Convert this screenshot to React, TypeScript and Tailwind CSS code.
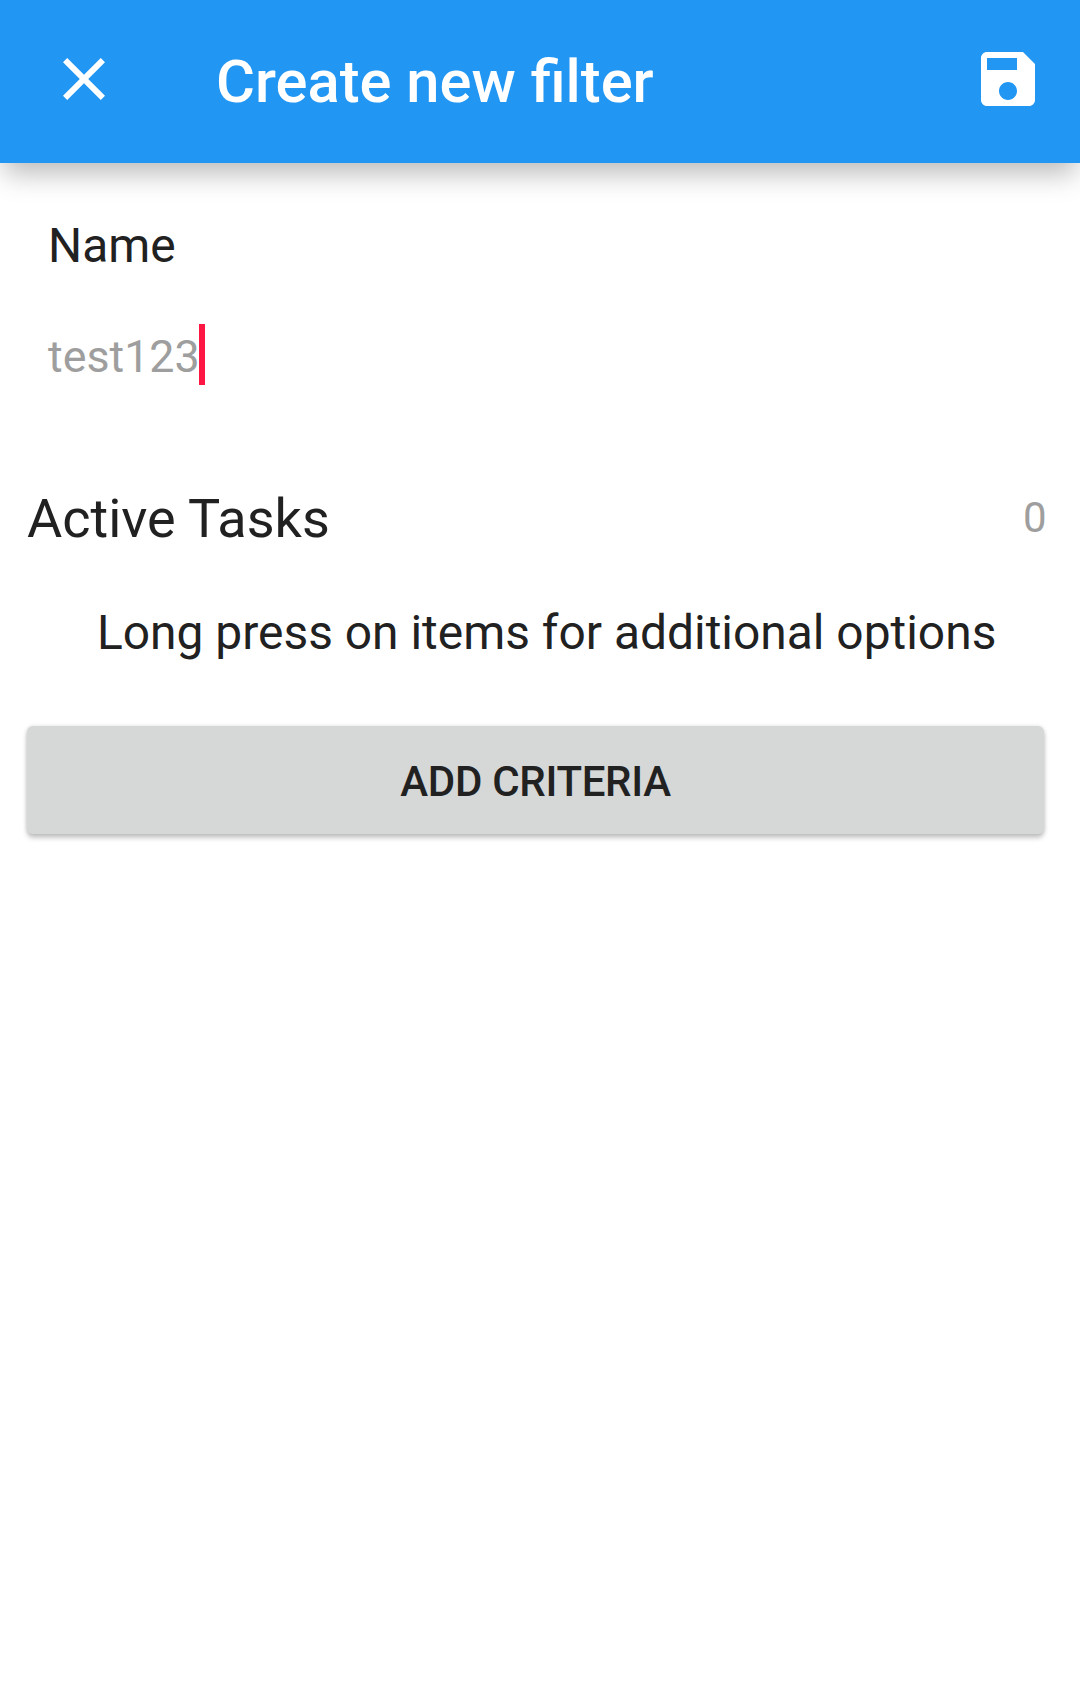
export default function App() {
  return (
    <div className="h-[1699px] w-[1080px] overflow-hidden bg-white font-['Roboto',sans-serif] text-[#212121]">
      <header className="flex h-[163px] items-start bg-[#2196f3] pt-[43px] pr-[36px] pl-[48px] text-white shadow-[0_14px_26px_-4px_rgba(0,0,0,0.28)]">
        <button aria-label="Close" className="size-[72px]">
          <svg viewBox="0 0 24 24" className="size-[72px]" fill="currentColor">
            <path d="M19 6.41 17.59 5 12 10.59 6.41 5 5 6.41 10.59 12 5 17.59 6.41 19 12 13.41 17.59 19 19 17.59 13.41 12z" />
          </svg>
        </button>
        <h1 className="mt-[4px] ml-[96px] grow text-[59.7px] leading-[70px] font-medium">Create new filter</h1>
        <button aria-label="Save" className="size-[72px]">
          <svg viewBox="0 0 24 24" className="size-[72px]" fill="currentColor">
            <path d="M17 3H5c-1.11 0-2 .9-2 2v14c0 1.1.89 2 2 2h14c1.1 0 2-.9 2-2V7l-4-4zm-5 16c-1.66 0-3-1.34-3-3s1.34-3 3-3 3 1.34 3 3-1.34 3-3 3zm3-10H5V5h10v4z" />
          </svg>
        </button>
      </header>
      <main className="px-[27px]">
        <section className="pt-[55px] pl-[21px]">
          <p className="text-[47.9px] leading-[56px]">Name</p>
          <div className="mt-[50px] flex h-[61px] items-start text-[44.8px] leading-[66px] text-[#9e9e9e]">
            <span className="w-[151px]">test123</span>
            <span className="h-[61px] w-[6px] bg-[#ff1744]" />
          </div>
        </section>
        <section className="mt-[102px] flex items-start justify-between pr-[6.5px]">
          <h2 className="text-[54px] leading-[64px]">Active Tasks</h2>
          <span className="text-[42px] leading-[62px] text-[#9e9e9e]">0</span>
        </section>
        <p className="mt-[54px] pl-[70px] text-[47.92px] leading-[56px] whitespace-nowrap">Long press on items for additional options</p>
        <button className="mt-[65px] h-[108px] w-[1017px] rounded-[6px] bg-[#d6d7d7] pt-[2px] text-[42px] font-medium tracking-[-0.3px] shadow-[0_4px_5px_rgba(0,0,0,0.22),0_0_4px_rgba(0,0,0,0.12)]">
          ADD CRITERIA
        </button>
      </main>
    </div>
  );
}
